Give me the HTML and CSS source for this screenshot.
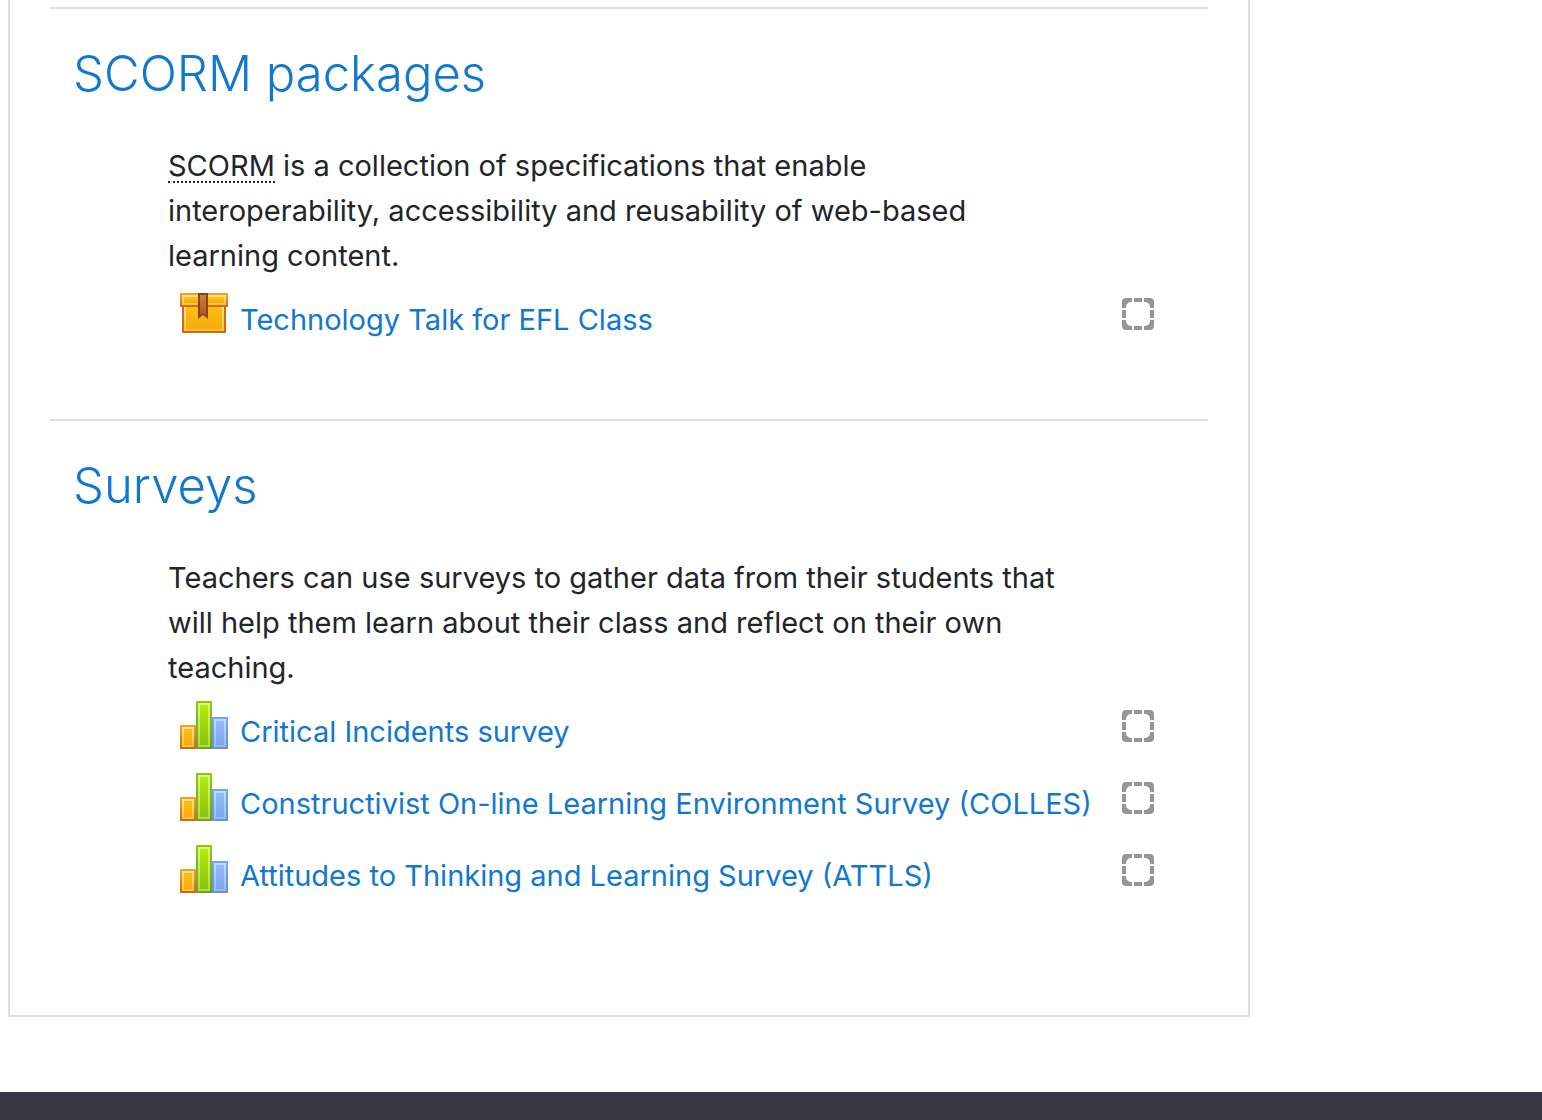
FILE: index.html
```html
<!DOCTYPE html>
<html lang="en">
  <head>
    <meta charset="utf-8">
    <title>Course activities</title>
    <link rel="stylesheet" href="styles.css">
  </head>
  <body>
    <svg class="defs" aria-hidden="true">
      <defs>
        <linearGradient id="orange-edge" x1="0" y1="0" x2="0" y2="1"><stop offset="0" stop-color="#f0a32b"/><stop offset="1" stop-color="#cb691c"/></linearGradient>
        <linearGradient id="orange-light" x1="0" y1="0" x2="0" y2="1"><stop offset="0" stop-color="#ffe58d"/><stop offset="1" stop-color="#fcc232"/></linearGradient>
        <linearGradient id="orange-fill" x1="0" y1="0" x2="0" y2="1"><stop offset="0" stop-color="#fdc010"/><stop offset="1" stop-color="#f4ab0d"/></linearGradient>
        <linearGradient id="green-edge" x1="0" y1="0" x2="0" y2="1"><stop offset="0" stop-color="#8bc90e"/><stop offset="1" stop-color="#6f9f2c"/></linearGradient>
        <linearGradient id="green-light" x1="0" y1="0" x2="0" y2="1"><stop offset="0" stop-color="#d8f982"/><stop offset="1" stop-color="#b0dc3b"/></linearGradient>
        <linearGradient id="green-fill" x1="0" y1="0" x2="0" y2="1"><stop offset="0" stop-color="#b2ed0c"/><stop offset="1" stop-color="#8bc10e"/></linearGradient>
        <linearGradient id="blue-edge" x1="0" y1="0" x2="0" y2="1"><stop offset="0" stop-color="#75a6f2"/><stop offset="1" stop-color="#6690dc"/></linearGradient>
        <linearGradient id="blue-light" x1="0" y1="0" x2="0" y2="1"><stop offset="0" stop-color="#bde0fe"/><stop offset="1" stop-color="#94bcf7"/></linearGradient>
        <linearGradient id="blue-fill" x1="0" y1="0" x2="0" y2="1"><stop offset="0" stop-color="#93bbf8"/><stop offset="1" stop-color="#7ea6ec"/></linearGradient>
        <linearGradient id="ribbon-fill" x1="0" y1="0" x2="0" y2="1"><stop offset="0" stop-color="#cc7c48"/><stop offset="1" stop-color="#b05a20"/></linearGradient>
      </defs>
      <symbol id="icon-package" viewBox="0 0 48 48">
        <path fill="#cb691c" d="M2 16h44v28H2z"/>
        <path fill="url(#orange-light)" d="M4 18h40v24H4z"/>
        <path fill="url(#orange-fill)" d="M6 18h36v22H6z"/>
        <path fill="url(#orange-edge)" d="M0 4h48v14H0z"/>
        <path fill="url(#orange-light)" d="M2 6h44v10H2z"/>
        <path fill="url(#orange-fill)" d="M4 8h40v6H4z"/>
        <path fill="#8d420f" d="M18 4h10v26l-5-4-5 4z"/>
        <path fill="url(#ribbon-fill)" d="M20 6h6v20l-3-2-3 2z"/>
      </symbol>
      <symbol id="icon-survey" viewBox="0 0 48 48">
        <path fill="url(#orange-edge)" d="M0 24h16v24H0z"/>
        <path fill="url(#orange-light)" d="M2 26h12v20H2z"/>
        <path fill="url(#orange-fill)" d="M4 28h8v16H4z"/>
        <path fill="url(#green-edge)" d="M16 0h16v48H16z"/>
        <path fill="url(#green-light)" d="M18 2h12v44H18z"/>
        <path fill="url(#green-fill)" d="M20 4h8v40h-8z"/>
        <path fill="url(#blue-edge)" d="M32 16h16v32H32z"/>
        <path fill="url(#blue-light)" d="M34 18h12v28H34z"/>
        <path fill="url(#blue-fill)" d="M36 20h8v24h-8z"/>
      </symbol>
      <symbol id="icon-auto" viewBox="0 0 32 32">
        <path fill="#969696" d="M0 10V4a4 4 0 0 1 4-4h6v4H9a5 5 0 0 0-5 5v1zM12 0h8v4h-8zM22 0h6a4 4 0 0 1 4 4v6h-4V9a5 5 0 0 0-5-5h-1zM28 12h4v8h-4zM32 22v6a4 4 0 0 1-4 4h-6v-4h1a5 5 0 0 0 5-5v-1zM12 28h8v4h-8zM10 32H4a4 4 0 0 1-4-4v-6h4v1a5 5 0 0 0 5 5h1zM0 12h4v8H0z"/>
      </symbol>
    </svg>

    <main class="course-content">
      <section class="section">
        <h2 class="section-name"><a href="#">SCORM packages</a></h2>
        <p class="summary"><abbr title="Sharable Content Object Reference Model">SCORM</abbr> is a collection of specifications that enable interoperability, accessibility and reusability of web-based learning content.</p>
        <ul class="activities">
          <li class="activity">
            <svg class="activity-icon"><use href="#icon-package"/></svg>
            <a class="activity-name" href="#" id="scorm-1">Technology Talk for EFL Class</a>
            <label class="completion"><input type="checkbox" aria-labelledby="scorm-1"><svg><use href="#icon-auto"/></svg></label>
          </li>
        </ul>
      </section>

      <section class="section">
        <h2 class="section-name"><a href="#">Surveys</a></h2>
        <p class="summary">Teachers can use surveys to gather data from their students that will help them learn about their class and reflect on their own teaching.</p>
        <ul class="activities">
          <li class="activity">
            <svg class="activity-icon"><use href="#icon-survey"/></svg>
            <a class="activity-name" href="#" id="survey-1">Critical Incidents survey</a>
            <label class="completion"><input type="checkbox" aria-labelledby="survey-1"><svg><use href="#icon-auto"/></svg></label>
          </li>
          <li class="activity">
            <svg class="activity-icon"><use href="#icon-survey"/></svg>
            <a class="activity-name" href="#" id="survey-2">Constructivist On-line Learning Environment Survey (COLLES)</a>
            <label class="completion"><input type="checkbox" aria-labelledby="survey-2"><svg><use href="#icon-auto"/></svg></label>
          </li>
          <li class="activity">
            <svg class="activity-icon"><use href="#icon-survey"/></svg>
            <a class="activity-name" href="#" id="survey-3">Attitudes to Thinking and Learning Survey (ATTLS)</a>
            <label class="completion"><input type="checkbox" aria-labelledby="survey-3"><svg><use href="#icon-auto"/></svg></label>
          </li>
        </ul>
      </section>
    </main>
    <footer class="page-footer"></footer>
  </body>
</html>
```
FILE: styles.css
```css
* {
  box-sizing: border-box;
}
body {
  margin: 0;
  min-height: 100vh;
  display: flex;
  flex-direction: column;
  background-color: #fff;
  color: #212529;
  font-family: Inter, "Liberation Sans", sans-serif;
  font-size: 29px;
  line-height: 45px;
}
a {
  color: #1177d1;
  text-decoration: none;
}
a:hover {
  text-decoration: underline;
}
.defs {
  position: absolute;
  width: 0;
  height: 0;
}
.course-content {
  margin: 0 292px 75px 8px;
  padding: 7px 40px 40px;
  border: 2px solid #dedede;
  border-top: 0;
}
.section {
  padding: 35px 0 69px;
  border-top: 2px solid #dee2e6;
}
.section-name {
  margin: 0 23px 39px;
  font-size: 49px;
  font-weight: 300;
  line-height: 60px;
}
.summary {
  margin: 0;
  padding: 0 130px 0 118px;
}
.summary abbr {
  display: inline-block;
  line-height: 30px;
  text-decoration: none;
  border-bottom: 2px dotted #212529;
  cursor: help;
}
.activities {
  list-style: none;
  margin: 0;
  padding: 0 54px 0 130px;
}
.activity {
  display: flex;
  align-items: center;
  height: 72px;
  padding: 11px 0;
}
.activity-icon {
  flex: none;
  align-self: flex-start;
  width: 48px;
  height: 48px;
  margin-right: 12px;
}
.activity-name {
  flex: 1;
  padding-top: 12px;
  line-height: 38px;
  white-space: nowrap;
}
.completion {
  flex: none;
  position: relative;
  width: 32px;
  height: 32px;
}
.completion svg {
  display: block;
  width: 32px;
  height: 32px;
}
.completion input {
  appearance: none;
  position: absolute;
  inset: 0;
  margin: 0;
  cursor: pointer;
}
.page-footer {
  flex: 1;
  min-height: 28px;
  background-color: #363942;
}
```
